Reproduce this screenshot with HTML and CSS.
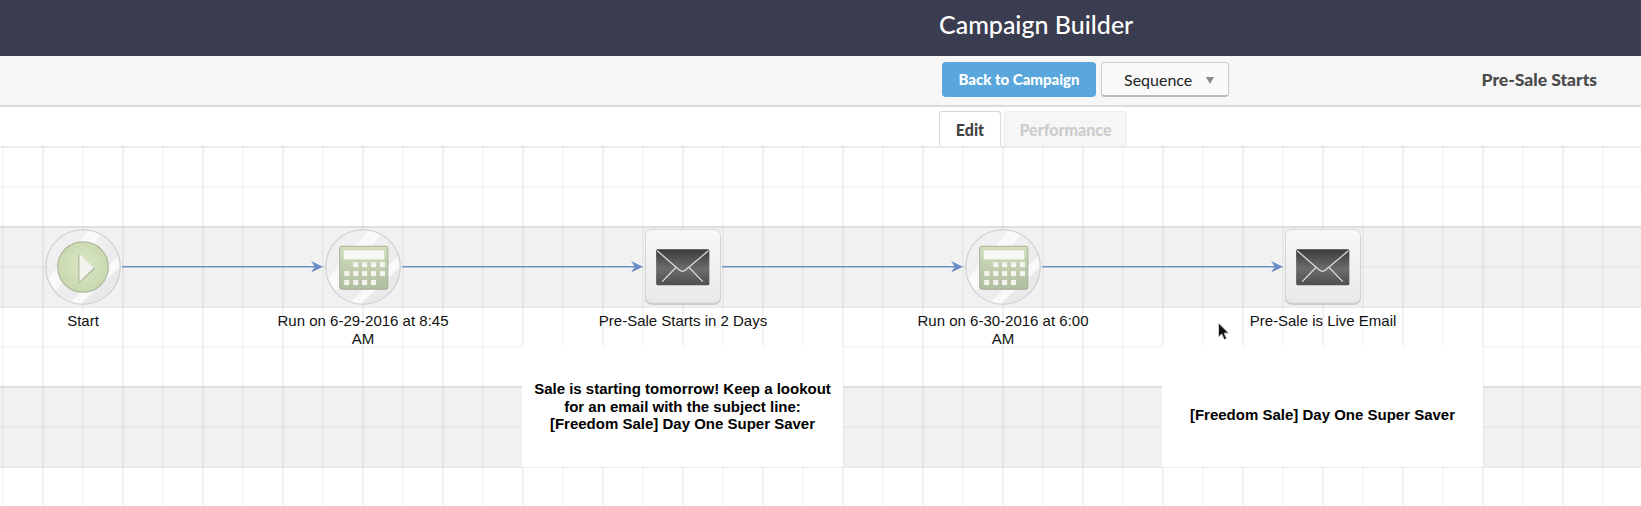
FILE: index.html
```html
<!doctype html>
<html lang="en">
  <head>
    <meta charset="UTF-8" />
    <title>Campaign Builder</title>
    <link rel="stylesheet" href="styles.css">
  </head>
  <body>
    <div class="app-header">
      <h1>Campaign Builder</h1>
    </div>
    <div class="toolbar">
      <a class="btn-back">Back to Campaign</a>
      <div class="btn-select">Sequence<span class="caret"></span></div>
      <div class="toolbar-title">Pre-Sale Starts</div>
    </div>
    <div class="tabs">
      <div class="tab active">Edit</div>
      <div class="tab disabled">Performance</div>
    </div>
    <div class="canvas">
      <svg class="connectors" width="1641" height="360">
        <defs>
          <linearGradient id="calcBody" x1="0" y1="0" x2="0" y2="1">
            <stop offset="0" stop-color="#d3dfbe" />
            <stop offset="1" stop-color="#aebd9f" />
          </linearGradient>
          <linearGradient id="cardBg" x1="0" y1="0" x2="0" y2="1">
            <stop offset="0" stop-color="#f8f8f8" />
            <stop offset="1" stop-color="#e9e9e9" />
          </linearGradient>
          <linearGradient id="envBg" x1="0" y1="0" x2="0" y2="1">
            <stop offset="0" stop-color="#3c3c3c" />
            <stop offset="0.55" stop-color="#6c6c6c" />
            <stop offset="1" stop-color="#4e4e4e" />
          </linearGradient>
          <linearGradient id="discBg" x1="0" y1="0" x2="1" y2="1">
            <stop offset="0" stop-color="#f1f1f1" />
            <stop offset="0.5" stop-color="#eeeeee" />
            <stop offset="1" stop-color="#e6e6e6" />
          </linearGradient>
          <radialGradient id="playBg" cx="0.5" cy="0.45" r="0.6">
            <stop offset="0" stop-color="#dbe7c6" />
            <stop offset="1" stop-color="#c6d6ac" />
          </radialGradient>
          <clipPath id="discClip"><circle cx="37.5" cy="37.5" r="36" /></clipPath>
          <symbol id="disc" viewBox="0 0 75 75">
            <circle cx="37.5" cy="37.5" r="37.5" fill="#d2d2d2" />
            <circle cx="37.5" cy="37.5" r="36.2" fill="url(#discBg)" />
            <g clip-path="url(#discClip)" fill="#f9f9f9">
              <polygon points="44,0 60,0 10,62 2,50" />
              <polygon points="75,24 75,36 34,75 22,75" />
            </g>
          </symbol>
          <symbol id="play" viewBox="0 0 75 75">
            <use href="#disc" width="75" height="75" />
            <circle cx="37.5" cy="37.5" r="25" fill="url(#playBg)" stroke="#a6b094" stroke-width="1" />
            <polygon points="33,24 49.5,39 33,54" fill="#a9b39b" />
            <polygon points="34,24.5 48.5,38 34,52" fill="#f3f3ee" />
          </symbol>
          <symbol id="calc" viewBox="0 0 75 75">
            <use href="#disc" width="75" height="75" />
            <rect x="14.5" y="17" width="47.5" height="42.5" rx="2" fill="url(#calcBody)" stroke="#9ba38c" stroke-width="0.8" />
            <rect x="18.5" y="21" width="40" height="9" fill="#f7f7f3" />
            <g fill="#f3f4ee">
              <rect x="27.8" y="32.7" width="5" height="5" />
              <rect x="36.6" y="32.7" width="5" height="5" />
              <rect x="45.4" y="32.7" width="5" height="5" />
              <rect x="54.2" y="32.7" width="5" height="5" />
              <rect x="19" y="41.5" width="5" height="5" />
              <rect x="27.8" y="41.5" width="5" height="5" />
              <rect x="36.6" y="41.5" width="5" height="5" />
              <rect x="45.4" y="41.5" width="5" height="5" />
              <rect x="54.2" y="41.5" width="5" height="5" />
              <rect x="19" y="50.3" width="5" height="5" />
              <rect x="27.8" y="50.3" width="5" height="5" />
              <rect x="36.6" y="50.3" width="5" height="5" />
              <rect x="45.4" y="50.3" width="5" height="5" />
            </g>
          </symbol>
          <symbol id="mail" viewBox="0 0 75 75">
            <rect x="0" y="0" width="75" height="75" rx="7" fill="#cdcdcd" />
            <rect x="0.8" y="0.8" width="73.4" height="72" rx="6" fill="url(#cardBg)" />
            <rect x="11" y="20" width="52.5" height="35.5" rx="1.5" fill="url(#envBg)" />
            <g fill="none" stroke="#dedede" stroke-width="1.2">
              <path d="M12 21.5 L34 40.5 Q37 43 40 40.5 L62.5 21.5" />
              <path d="M17 52 L30.5 38" />
              <path d="M57 52 L43.5 38" />
            </g>
          </symbol>
        </defs>
        <g fill="#6c8ec8">
          <rect x="122" y="120" width="195" height="1.4" />
          <polygon points="323,120.7 311,115 315,120.7 311,126.5" />
          <rect x="402" y="120" width="235" height="1.4" />
          <polygon points="643,120.7 631,115 635,120.7 631,126.5" />
          <rect x="722" y="120" width="235" height="1.4" />
          <polygon points="963,120.7 951,115 955,120.7 951,126.5" />
          <rect x="1042" y="120" width="235" height="1.4" />
          <polygon points="1283,120.7 1271,115 1275,120.7 1271,126.5" />
        </g>
      </svg>

      <div class="node node-start">
        <svg class="node-icon" width="76" height="76"><use href="#play" /></svg>
        <div class="node-label">Start</div>
      </div>
      <div class="node node-run1">
        <svg class="node-icon" width="76" height="76"><use href="#calc" /></svg>
        <div class="node-label">Run on 6-29-2016 at 8:45 AM</div>
      </div>
      <div class="node node-mail1">
        <svg class="node-icon" width="76" height="76"><use href="#mail" /></svg>
        <div class="node-label">Pre-Sale Starts in 2 Days</div>
      </div>
      <div class="node node-run2">
        <svg class="node-icon" width="76" height="76"><use href="#calc" /></svg>
        <div class="node-label">Run on 6-30-2016 at 6:00 AM</div>
      </div>
      <div class="node node-mail2">
        <svg class="node-icon" width="76" height="76"><use href="#mail" /></svg>
        <div class="node-label">Pre-Sale is Live Email</div>
      </div>

      <div class="note note-first">
        <p>Sale is starting tomorrow! Keep a lookout<br />for an email with the subject line:<br />[Freedom Sale] Day One Super Saver</p>
      </div>
      <div class="note note-second">
        <p>[Freedom Sale] Day One Super Saver</p>
      </div>

      <svg class="pointer" width="13" height="20" viewBox="0 0 13 20">
        <path d="M1.5 1 L1.5 15 L4.8 12 L7.2 17.6 L9.6 16.6 L7.2 11.2 L11.6 11 Z" fill="#111" stroke="#ddd" stroke-width="0.8" />
      </svg>
    </div>
  </body>
</html>
```

FILE: styles.css
```css
* {
  box-sizing: border-box;
}

body {
  margin: 0;
  padding: 0;
  width: 1641px;
  height: 506px;
  overflow: hidden;
  font-family: Lato, 'Open Sans', sans-serif;
  background-color: #fff;
}

.app-header {
  height: 56px;
  padding-left: 939px;
  background-color: #3a3d4f;
}

.app-header h1 {
  margin: 0;
  font-size: 25px;
  font-weight: 500;
  line-height: 48px;
  color: #fff;
}

.toolbar {
  display: flex;
  align-items: center;
  height: 51px;
  padding-left: 942px;
  padding-right: 44px;
  padding-bottom: 2px;
  background-color: #f6f6f6;
  border-bottom: 2px solid #dcdcdc;
}

.btn-back {
  width: 154px;
  height: 35px;
  border-radius: 4px;
  background-color: #5aa7dd;
  color: #fff;
  font-size: 15px;
  font-weight: 900;
  line-height: 35px;
  text-align: center;
}

.btn-select {
  display: flex;
  align-items: center;
  width: 128px;
  height: 35px;
  margin-left: 5px;
  padding-left: 22px;
  background-color: #fafafa;
  border: 1px solid #ccc;
  border-bottom: 2px solid #bbb;
  border-radius: 4px;
  color: #222;
  font-size: 16px;
}

.caret {
  width: 0;
  height: 0;
  margin-left: 14px;
  margin-top: 2px;
  border-left: 4px solid transparent;
  border-right: 4px solid transparent;
  border-top: 7px solid #8a8a8a;
}

.toolbar-title {
  margin-left: auto;
  font-size: 17.5px;
  font-weight: 900;
  color: #4a4a4a;
}

.tabs {
  display: flex;
  gap: 3px;
  height: 39px;
  padding-top: 4px;
  padding-left: 939px;
}

.tab {
  height: 35px;
  border: 1px solid #e2e2e2;
  border-bottom: none;
  border-radius: 3px 3px 0 0;
  font-size: 16px;
  font-weight: 900;
  line-height: 35px;
  text-align: center;
}

.tab.active {
  width: 62px;
  border-color: #d8d8d8;
  color: #444;
}

.tab.disabled {
  width: 123px;
  background-color: #f6f6f6;
  border-color: #eee;
  color: #ccc;
}

.canvas {
  position: relative;
  height: 360px;
  background-color: #fff;
  background-image:
    linear-gradient(90deg, rgba(0, 0, 0, 0.055) 2px, transparent 2px),
    linear-gradient(90deg, rgba(0, 0, 0, 0.03) 2px, transparent 2px),
    linear-gradient(rgba(0, 0, 0, 0.075) 2px, transparent 2px),
    linear-gradient(rgba(0, 0, 0, 0.03) 2px, transparent 2px),
    linear-gradient(#f1f1f1 50%, transparent 50%);
  background-size:
    80px 100%,
    80px 100%,
    100% 80px,
    100% 80px,
    100% 160px;
  background-position:
    42px 0,
    2px 0,
    0 0,
    0 40px,
    0 80px;
}

.connectors {
  position: absolute;
  left: 0;
  top: 0;
}

.node {
  position: absolute;
  top: 83px;
  display: flex;
  flex-direction: column;
  align-items: center;
  width: 180px;
}

.node-start { left: -7px; }
.node-run1 { left: 273px; }
.node-mail1 { left: 593px; }
.node-run2 { left: 913px; }
.node-mail2 { left: 1233px; }

.node-icon {
  display: block;
}

.node-label {
  margin-top: 7px;
  font-family: 'Liberation Sans', Arial, sans-serif;
  font-size: 15px;
  line-height: 17.5px;
  text-align: center;
  color: #111;
}

.note {
  position: absolute;
  top: 200px;
  display: flex;
  align-items: center;
  justify-content: center;
  width: 321px;
  height: 121px;
  background-color: #fff;
  font-family: 'Liberation Sans', Arial, sans-serif;
  font-size: 15px;
  font-weight: 700;
  line-height: 17.5px;
  text-align: center;
  color: #000;
}

.note p {
  margin: 0;
}

.note-first { left: 522px; }

.note-second {
  left: 1162px;
  padding-top: 17px;
}

.pointer {
  position: absolute;
  left: 1217px;
  top: 176px;
}
```
